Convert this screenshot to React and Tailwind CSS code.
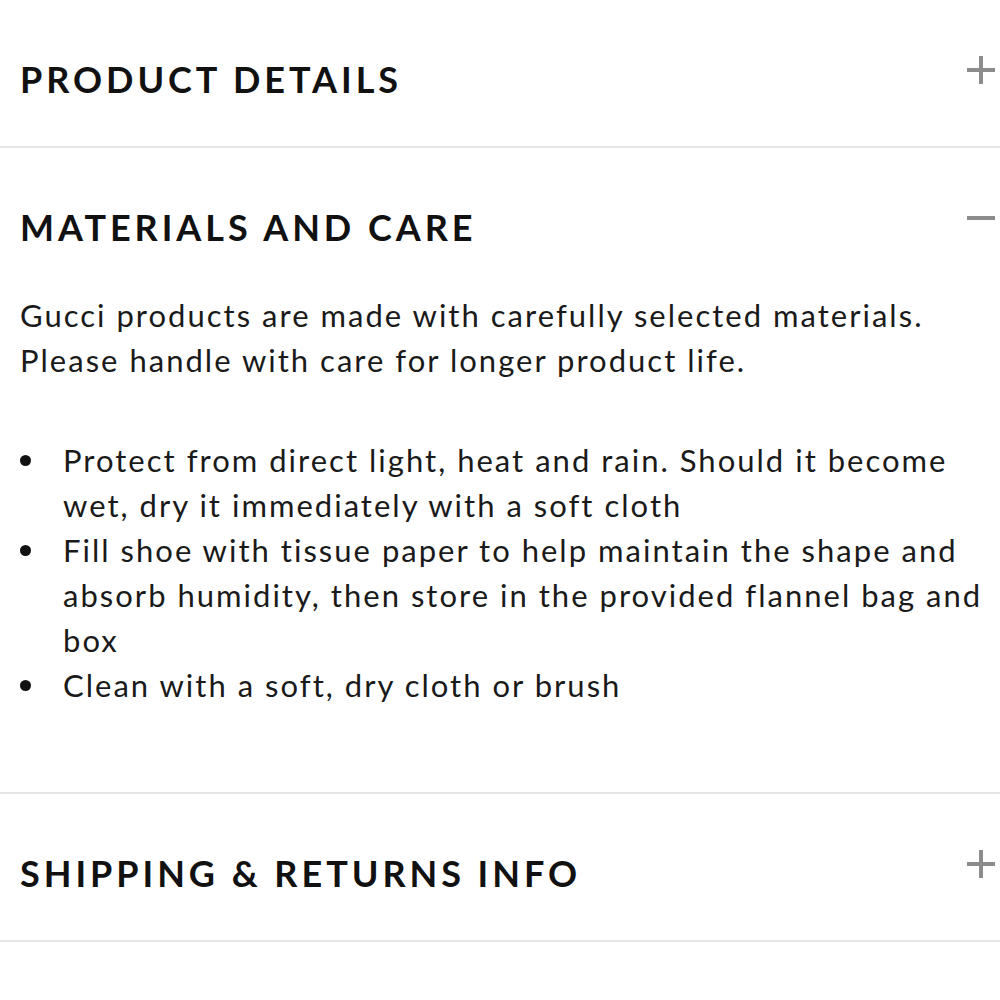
import React, { useState } from "react";

const sections = [
  { id: "details", title: "PRODUCT DETAILS" },
  { id: "care", title: "MATERIALS AND CARE" },
  { id: "shipping", title: "SHIPPING & RETURNS INFO" },
];

const careTips = [
  "Protect from direct light, heat and rain. Should it become wet, dry it immediately with a soft cloth",
  "Fill shoe with tissue paper to help maintain the shape and absorb humidity, then store in the provided flannel bag and box",
  "Clean with a soft, dry cloth or brush",
];

function ToggleIcon({ open }) {
  return (
    <svg width="30" height="30" viewBox="0 0 30 30" className="text-[#8c8c8c]" aria-hidden>
      <rect x="1" y="13" width="28" height="4" fill="currentColor" />
      {!open && <rect x="13" y="1" width="4" height="28" fill="currentColor" />}
    </svg>
  );
}

export default function App() {
  const [openId, setOpenId] = useState("care");

  return (
    <div className="min-h-screen w-full overflow-hidden bg-white font-['Lato',sans-serif] text-[#111]">
      {sections.map((s) => {
        const open = openId === s.id;
        return (
          <section key={s.id} className="border-b-2 border-[#e6e6e6]">
            <button
              type="button"
              onClick={() => setOpenId(open ? null : s.id)}
              className="flex w-full items-start justify-between pl-5 pr-1 text-left"
            >
              <h2 className="pt-[59px] pb-[47px] text-[36px] font-bold leading-[40px] tracking-[0.11em]">
                {s.title}
              </h2>
              <span className="pt-[55px]">
                <ToggleIcon open={open} />
              </span>
            </button>

            {open && s.id === "care" && (
              <div className="pl-5 pr-3 pb-[84px] text-[31px] leading-[45px] tracking-[0.065em] text-[#1a1a1a]">
                <p className="-mt-[1px]">
                  Gucci products are made with carefully selected materials.
                  <br />
                  Please handle with care for longer product life.
                </p>
                <ul className="mt-[55px]">
                  {careTips.map((tip) => (
                    <li key={tip} className="flex">
                      <span className="w-[43px] shrink-0">
                        <span className="mt-[17px] block h-[11px] w-[11px] rounded-full bg-[#111]" />
                      </span>
                      <span>{tip}</span>
                    </li>
                  ))}
                </ul>
              </div>
            )}
          </section>
        );
      })}
    </div>
  );
}
